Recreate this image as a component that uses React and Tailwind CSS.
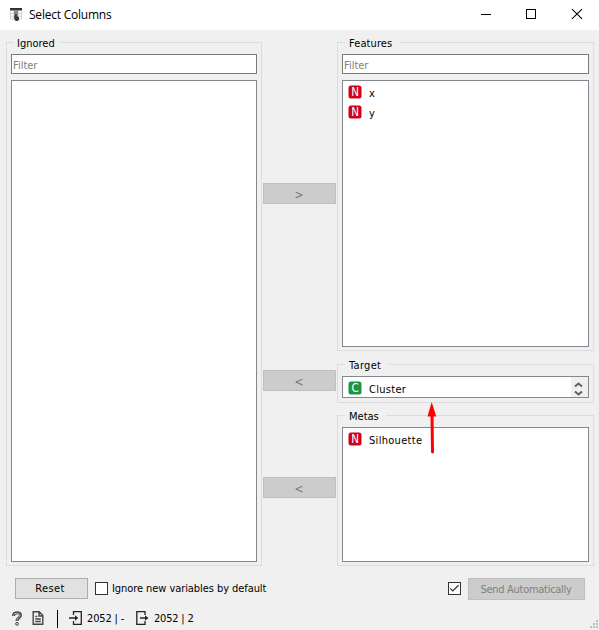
import React from "react";

function Group({ title, className, labelClass, children }) {
  return (
    <section className={`flex flex-col border border-[#dcdcdc] px-1 ${className}`}>
      <div className="-mt-[7px] ml-[3px] flex h-[14px] shrink-0 self-start bg-[#f0f0f0] pl-[3px] pr-[6px] leading-[16px]">
        <span className={labelClass}>{title}</span>
      </div>
      {children}
    </section>
  );
}

function Filter() {
  return (
    <div className="mt-[4px] h-[20px] shrink-0 border border-[#7a7a7a] bg-white pl-px leading-[21px] text-[#808080]">
      <span>Filter</span>
    </div>
  );
}

function Variable({ kind, name }) {
  return (
    <div className="flex h-5 items-center pl-[5px]">
      <svg width="14" height="14" viewBox="0 0 14 14" className="shrink-0">
        <rect x="0.5" y="0.5" width="13" height="13" rx="2.5" fill={kind === "N" ? "#d0021b" : "#1a9641"} />
        <text x="7" y="11.2" textAnchor="middle" fontFamily="DejaVu Sans Condensed, DejaVu Sans, sans-serif" fontSize="11.5" fill="white">{kind}</text>
      </svg>
      <span className="ml-[7px] mt-[3px] leading-[16px] tracking-[0.3px]">{name}</span>
    </div>
  );
}

function MoveButton({ children, className = "" }) {
  return (
    <div className={`flex h-[21px] w-[73px] shrink-0 items-center justify-center border border-[#bfbfbf] bg-[#cccccc] pt-[2px] pr-px text-[12px] text-[#777777] ${className}`}>
      {children}
    </div>
  );
}

function CheckBox({ checked = false }) {
  return (
    <svg width="13" height="13" viewBox="0 0 13 13" fill="none" className="mb-px shrink-0">
      <rect x="0.5" y="0.5" width="12" height="12" fill="white" stroke="#333333" />
      {checked && <path d="M2.2 6.3 4.8 9l5.8-5.7" stroke="#333333" strokeWidth="1.2" />}
    </svg>
  );
}

export default function App() {
  return (
    <div className="flex h-[630px] w-[599px] flex-col overflow-hidden whitespace-nowrap bg-[#f0f0f0] text-[11px] text-black [font-family:'DejaVu_Sans_Condensed','DejaVu_Sans',sans-serif] [font-stretch:condensed]">
      <header className="flex h-[30px] shrink-0 items-center bg-white pl-[10px] pr-[16px]">
        <svg width="12" height="13" viewBox="0 0 12 13" className="mb-px shrink-0">
          <path d="M0 0h12v2.5H0z" fill="#333" />
          <path d="M.5 2.5v8.5h11V2.5M4 3v8M8 3v8M1 5.5h10M1 8.2h10" fill="none" stroke="#c4c4c4" strokeWidth=".8" />
          <path d="M4 2.5h4v7H4z" fill="#888" />
          <path d="M5.3 6h1.4v2.2L9 9v2.2L8 13H5.6L4 10.4z" fill="#3a3a3a" />
        </svg>
        <span className="ml-[7px] text-[12px] tracking-[-0.22px] [font-family:'Open_Sans','Noto_Sans',sans-serif] [font-stretch:normal]">Select Columns</span>
        <svg width="102" height="12" viewBox="0 0 102 12" className="mb-[2px] ml-auto shrink-0" fill="none" stroke="black">
          <path d="M0 6.5h10" />
          <rect x="45.5" y="1.5" width="9" height="9" />
          <path d="m91 1.2 10 9.6M101 1.2 91 10.8" strokeWidth="1.1" />
        </svg>
      </header>

      <main className="flex h-[536px] shrink-0 pl-[6px] pt-[12px]">
        <Group title="Ignored" className="h-[524px] w-[256px] pb-[3px]" labelClass="w-[38px]">
          <Filter />
          <div className="mt-[6px] flex-1 border border-[#828790] bg-white" />
        </Group>

        <div className="flex w-[75px] shrink-0 flex-col pl-px pt-[141px]">
          <MoveButton>&gt;</MoveButton>
          <MoveButton className="mt-[166px]">&lt;</MoveButton>
          <MoveButton className="mt-[86px]">&lt;</MoveButton>
        </div>

        <div className="flex w-[257px] shrink-0 flex-col">
          <Group title="Features" className="h-[309px] pb-[3px]" labelClass="w-[46px] pl-px tracking-[0.1px]">
            <Filter />
            <div className="mt-[6px] flex-1 border border-[#828790] bg-white pt-px">
              <Variable kind="N" name="x" />
              <Variable kind="N" name="y" />
            </div>
          </Group>
          <Group title="Target" className="mt-[13px] h-[39px]" labelClass="w-[35px] pl-px tracking-[0.3px]">
            <div className="mt-[4px] flex h-[22px] shrink-0 justify-between border border-[#828790] bg-white">
              <div className="pt-px"><Variable kind="C" name="Cluster" /></div>
              <div className="flex w-[17px] items-center justify-center bg-[#f0f0f0]">
                <svg width="9" height="16" viewBox="0 0 9 16" fill="none" stroke="#606060" strokeWidth="2" className="mr-[2px] mt-[3px]">
                  <path d="m1 5.5 3.5-3L8 5.5M1 10.5l3.5 3L8 10.5" />
                </svg>
              </div>
            </div>
          </Group>
          <Group title="Metas" className="mt-[12px] h-[151px] pb-[3px]" labelClass="w-[32px] pl-px">
            <div className="mt-[4px] flex-1 border border-[#828790] bg-white pt-px">
              <Variable kind="N" name="Silhouette" />
            </div>
          </Group>
        </div>
      </main>

      <div className="flex h-[36px] shrink-0 items-end pb-[2px] pl-[15px]">
        <div className="mb-px flex h-[21px] w-[73px] items-center justify-center border border-[#adadad] bg-[#e1e1e1] pr-[3px] pt-px tracking-[0.4px]">Reset</div>
        <div className="ml-[7px] flex h-[22px] items-center">
          <CheckBox />
          <span className="ml-[4px] w-[155px] tracking-[-0.07px]">Ignore new variables by default</span>
        </div>
        <div className="ml-[181px] flex h-[22px] items-center"><CheckBox checked /></div>
        <div className="ml-[7px] flex h-[22px] w-[117px] items-center justify-center border border-[#bfbfbf] bg-[#cccccc] pr-px pt-[2px] tracking-[-0.28px] text-[#808080]">Send Automatically</div>
      </div>

      <footer className="flex h-[28px] items-center pl-[12px] pb-px pt-[6px]">
        <svg width="10" height="15" viewBox="0 0 10 15" fill="none" className="shrink-0">
          <path d="M1.5 5C1.5 .8 8.5.8 8.5 4.2 8.5 7 5 6.8 5 10" stroke="#444" strokeWidth="3" />
          <path d="M1.5 4.6C1.8 1.5 8 1.4 8 4.3 8 6.7 5 6.8 5 9.6" stroke="#ddd" strokeWidth=".8" />
          <circle cx="5" cy="12.8" r="1.4" fill="#ddd" stroke="#444" />
        </svg>
        <svg width="12" height="14" viewBox="0 0 12 14" fill="none" stroke="#444" className="mb-px ml-[10px] shrink-0">
          <path d="M1.2.8h6l3.6 3.7v8.7H1.2zM7 1v4h4M3.3 5.5h2M3.3 8h5.5M3.3 10.5h5.5" strokeWidth="1.4" />
        </svg>
        <div className="ml-[13px] h-[18px] w-px shrink-0 bg-black" />
        <svg width="13" height="14" viewBox="0 0 13 14" fill="none" stroke="#222" className="mb-px ml-[11px] shrink-0">
          <path d="M4.5 4V.7h7.8v12.6H4.5V10M0 7h7" strokeWidth="1.3" />
          <path d="M6 4.2 9.3 7 6 9.8z" fill="#222" stroke="none" />
        </svg>
        <span className="ml-[5px] w-[38px] pt-px tracking-[-0.15px]">2052 | -</span>
        <svg width="13" height="14" viewBox="0 0 13 14" fill="none" stroke="#222" className="mb-px ml-[11px] shrink-0">
          <path d="M9 4V.7H.8v12.6H9V10M4 7h6" strokeWidth="1.3" />
          <path d="M9 4.2 12.5 7 9 9.8z" fill="#222" stroke="none" />
        </svg>
        <span className="ml-[5px] pt-px tracking-[-0.2px]">2052 | 2</span>
        <svg width="8" height="8" viewBox="0 0 8 8" className="ml-auto mr-[1px] mt-[10px] shrink-0" fill="#bfbfbf">
          <path d="M6 0h2v2H6zM3 3h2v2H3zM6 3h2v2H6zM0 6h2v2H0zM3 6h2v2H3zM6 6h2v2H6z" />
        </svg>
      </footer>

      <svg width="12" height="54" viewBox="0 0 12 54" className="absolute left-[426px] top-[400px]">
        <path d="M6 14 6.5 52" stroke="#ff0000" strokeWidth="3" strokeLinecap="round" />
        <path d="M5.7 2 10.2 16.5H1.5z" fill="#ff0000" />
      </svg>
    </div>
  );
}
